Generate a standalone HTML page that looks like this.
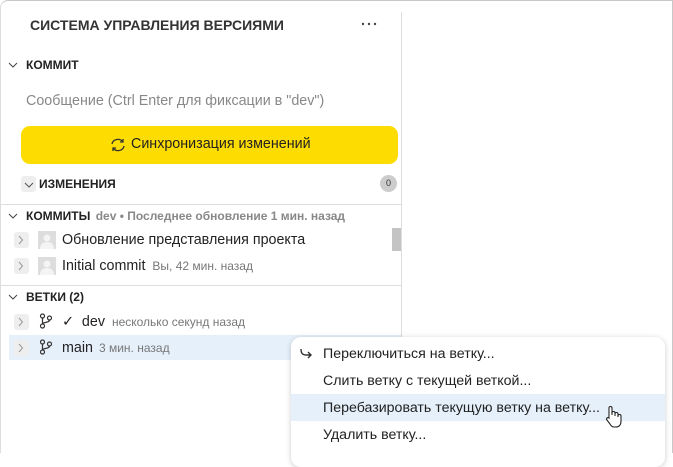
<!DOCTYPE html><html><head><style>
body{margin:0;width:673px;height:453px;overflow:hidden;background:#fff;font-family:"Liberation Sans",sans-serif;position:relative}
.a{position:absolute;white-space:nowrap}
.b{font-weight:bold;font-size:12px;color:#222}
.chev{position:absolute;width:15px;height:16px;background:#eee;border-radius:3px}
.g{color:#777;font-size:12px}
</style></head><body>
<div class="a" style="left:0;top:0;width:671px;height:452px;border:1px solid #c8c8c8;border-left:1px solid #ddd;border-radius:8px 0 0 0;border-bottom:none"></div>
<div class="a" style="left:401px;top:12px;width:1px;height:441px;background:#ddd"></div>
<div class="a b" style="left:30px;top:17px;font-size:14px;color:#333">СИСТЕМА УПРАВЛЕНИЯ ВЕРСИЯМИ</div>
<svg class="a" style="left:361px;top:22px" width="16" height="4"><circle cx="2" cy="2" r="1.2" fill="#444"/><circle cx="8" cy="2" r="1.2" fill="#444"/><circle cx="14" cy="2" r="1.2" fill="#444"/></svg>
<svg class="a" style="left:8px;top:61px" width="10" height="8"><path d="M1 2l4 4 4-4" stroke="#444" fill="none"/></svg>
<div class="a b" style="left:26px;top:58px">КОММИТ</div>
<div class="a" style="left:26px;top:93px;font-size:14.3px;color:#888">Сообщение (Ctrl Enter для фиксации в "dev")</div>
<div class="a" style="left:21px;top:126px;width:377px;height:38px;background:#fddc01;border-radius:9px"></div>
<svg class="a" style="left:109px;top:137px" width="18" height="16" viewBox="0 0 18 16"><path d="M3 7a6 5.5 0 0 1 11-2M15 9a6 5.5 0 0 1-11 2" stroke="#333" stroke-width="1.3" fill="none"/><path d="M14 2v3h-3M4 14v-3h3" stroke="#333" stroke-width="1.3" fill="none"/></svg>
<div class="a" style="left:131px;top:136px;font-size:14.3px;color:#222">Синхронизация изменений</div>
<div class="chev" style="left:21px;top:176px"></div>
<svg class="a" style="left:24px;top:181px" width="10" height="8"><path d="M1 2l4 4 4-4" stroke="#555" fill="none"/></svg>
<div class="a b" style="left:39px;top:177px">ИЗМЕНЕНИЯ</div>
<div class="a" style="left:380px;top:175px;width:17px;height:17px;border-radius:50%;background:#ccc;font-size:9px;text-align:center;line-height:17px;color:#333">0</div>
<div class="a" style="left:1px;top:204px;width:400px;height:1px;background:#ddd"></div>
<svg class="a" style="left:8px;top:212px" width="10" height="8"><path d="M1 2l4 4 4-4" stroke="#444" fill="none"/></svg>
<div class="a b" style="left:26px;top:209px">КОММИТЫ <span style="color:#888;font-weight:bold;font-size:12px;margin-left:2px">dev • Последнее обновление 1 мин. назад</span></div>
<div class="a" style="left:392px;top:228px;width:9px;height:23px;background:#c4c4c4"></div>
<div class="chev" style="left:14px;top:232px"></div>
<div class="chev" style="left:14px;top:258px"></div>
<div class="chev" style="left:14px;top:314px"></div>
<div class="a" style="left:9px;top:335px;width:392px;height:25px;background:#e6f0fb"></div>
<div class="chev" style="left:14px;top:340px"></div>
<svg class="a" style="left:0;top:0" width="30" height="360"><g stroke="#999" fill="none" stroke-width="1"><path d="M19 236l3.5 4-3.5 4M19 262l3.5 4-3.5 4M19 318l3.5 4-3.5 4M19 344l3.5 4-3.5 4"/></g></svg>
<svg class="a" style="left:38px;top:231px" width="18" height="18"><rect width="18" height="18" fill="#ddd"/><circle cx="9" cy="7" r="3.5" fill="#f4f4f4"/><path d="M2 18c0-5 3-7 7-7s7 2 7 7z" fill="#f4f4f4"/></svg>
<div class="a" style="left:62px;top:232px;font-size:14.3px;color:#222">Обновление представления проекта</div>
<svg class="a" style="left:38px;top:257px" width="18" height="18"><rect width="18" height="18" fill="#ddd"/><circle cx="9" cy="7" r="3.5" fill="#f4f4f4"/><path d="M2 18c0-5 3-7 7-7s7 2 7 7z" fill="#f4f4f4"/></svg>
<div class="a" style="left:62px;top:258px;font-size:14.3px;color:#222">Initial commit <span class="g" style="margin-left:3px">Вы, 42 мин. назад</span></div>
<div class="a" style="left:1px;top:285px;width:400px;height:1px;background:#ddd"></div>
<svg class="a" style="left:8px;top:293px" width="10" height="8"><path d="M1 2l4 4 4-4" stroke="#444" fill="none"/></svg>
<div class="a b" style="left:26px;top:290px">ВЕТКИ (2)</div>
<svg class="a" style="left:39px;top:313px" width="14" height="16"><g stroke="#333" fill="none" stroke-width="1.2"><circle cx="3.5" cy="3" r="2"/><circle cx="3.5" cy="13" r="2"/><circle cx="10.5" cy="5" r="2"/><path d="M3.5 5v6M10.5 7c0 3-7 2-7 4"/></g></svg>
<svg class="a" style="left:39px;top:339px" width="14" height="16"><g stroke="#333" fill="none" stroke-width="1.2"><circle cx="3.5" cy="3" r="2"/><circle cx="3.5" cy="13" r="2"/><circle cx="10.5" cy="5" r="2"/><path d="M3.5 5v6M10.5 7c0 3-7 2-7 4"/></g></svg>
<div class="a" style="left:62px;top:314px;font-size:14.3px;color:#222">✓ &nbsp;dev <span class="g" style="margin-left:3px">несколько секунд назад</span></div>
<div class="a" style="left:62px;top:340px;font-size:14.3px;color:#222">main <span class="g" style="margin-left:2px">3 мин. назад</span></div>
<div class="a" style="left:291px;top:337px;width:374px;height:130px;background:#fff;border-radius:10px;box-shadow:0 1px 6px rgba(0,0,0,.2)"></div>
<div class="a" style="left:291px;top:394px;width:374px;height:27px;background:#e6f0fb"></div>
<svg class="a" style="left:299px;top:348px" width="14" height="12"><path d="M2 1c0 5 2 6 6 6h4M9 4l3 3-3 3" stroke="#333" stroke-width="1.4" fill="none"/></svg>
<div class="a" style="left:323px;top:346px;font-size:14.2px;color:#222">Переключиться на ветку...</div>
<div class="a" style="left:323px;top:373px;font-size:14.2px;color:#222">Слить ветку с текущей веткой...</div>
<div class="a" style="left:323px;top:400px;font-size:14.2px;color:#222">Перебазировать текущую ветку на ветку...</div>
<div class="a" style="left:323px;top:427px;font-size:14.2px;color:#222">Удалить ветку...</div>
<svg class="a" style="left:604px;top:405px" width="20" height="24" viewBox="0 0 20 24"><path d="M5 13V3a1.5 1.5 0 0 1 3 0v7V8a1.5 1.5 0 0 1 3 0v3V9a1.5 1.5 0 0 1 3 0v3-1a1.5 1.5 0 0 1 3 0v5c0 4-2 6-5 6h-2c-2 0-3-1-4-3l-3-4a1.3 1.3 0 0 1 2-2z" fill="#fff" stroke="#222" stroke-width="1.1"/></svg>
</body></html>
